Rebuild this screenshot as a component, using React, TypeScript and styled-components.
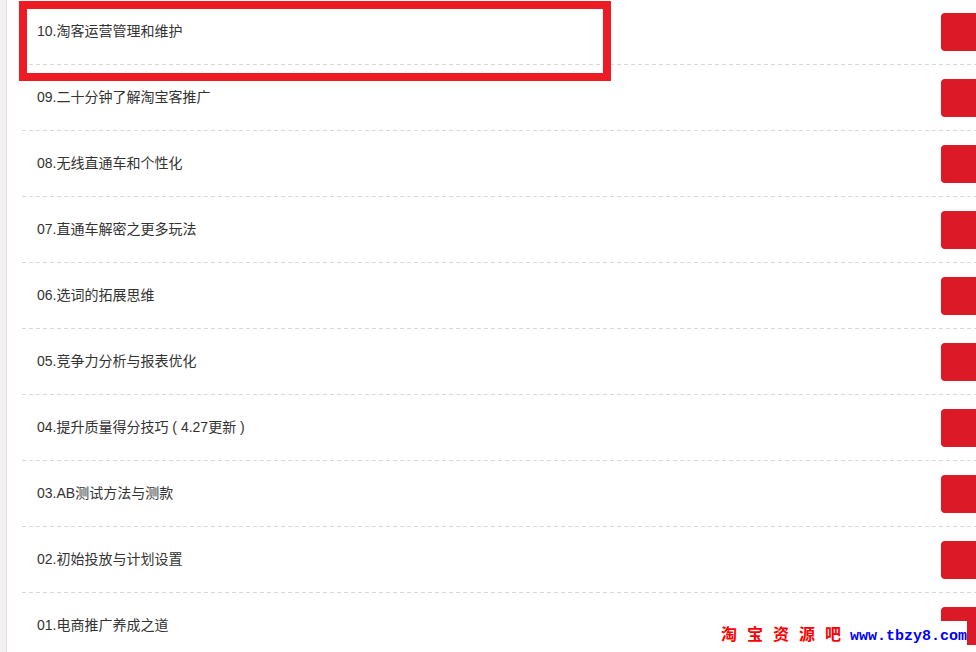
import styled, { createGlobalStyle } from "styled-components";

const GlobalStyle = createGlobalStyle`
    html, body {
        margin: 0;
        padding: 0;
        background: #ffffff;
        overflow: hidden;
    }
    body {
        font-family: "Liberation Sans", "Noto Sans CJK SC", sans-serif;
    }
`

const Page = styled.div`
    display: flex;
    width: 976px;
    height: 652px;
    overflow: hidden;
    position: relative;
`

const SideStrip = styled.div`
    width: 6px;
    flex-shrink: 0;
    background-color: #f2f1ef;
    border-right: 1px solid #e3e2e0;
`

const LessonList = styled.ul`
    list-style: none;
    margin: -1px 0 0 15px;
    padding: 0;
    width: 999px;
    flex-shrink: 0;
`

const LessonRow = styled.li`
    display: flex;
    align-items: center;
    justify-content: space-between;
    height: 65px;
    padding-left: 15px;
    background-image: repeating-linear-gradient(to right, #d8d8d8 0 4px, transparent 4px 7px);
    background-size: 100% 1px;
    background-repeat: no-repeat;
    background-position: left bottom;
    padding-bottom: 1px;
`

const LessonTitle = styled.span`
    font-size: 14px;
    line-height: 20px;
    color: #333333;
    margin-bottom: 2px;
`

const PlayButton = styled.button`
    width: 80px;
    height: 38px;
    border: none;
    border-radius: 4px;
    background-color: #dc1a27;
    cursor: pointer;
`

const Highlight = styled.div`
    position: absolute;
    left: 19px;
    top: 1px;
    width: 576px;
    height: 64px;
    border: 8px solid #ed1c24;
    pointer-events: none;
`

const Watermark = styled.div`
    position: absolute;
    right: 9px;
    bottom: 0;
    height: 31px;
    box-sizing: border-box;
    padding: 4px 0 0 12px;
    display: flex;
    align-items: baseline;
    background: #ffffff;
`

const WatermarkName = styled.span`
    font-family: "Noto Sans CJK SC", sans-serif;
    font-size: 16px;
    font-weight: 700;
    letter-spacing: 10px;
    color: #ff0000;
    line-height: 1;
    margin-right: -1px;
`

const WatermarkUrl = styled.span`
    font-family: "Liberation Mono", monospace;
    font-size: 15px;
    font-weight: 700;
    color: #0000ff;
    line-height: 1;
`

const lessons = [
    "10.淘客运营管理和维护",
    "09.二十分钟了解淘宝客推广",
    "08.无线直通车和个性化",
    "07.直通车解密之更多玩法",
    "06.选词的拓展思维",
    "05.竞争力分析与报表优化",
    "04.提升质量得分技巧 ( 4.27更新 )",
    "03.AB测试方法与测款",
    "02.初始投放与计划设置",
    "01.电商推广养成之道",
]

const App: React.FC = () => {
    return (
        <Page>
            <GlobalStyle />
            <SideStrip />
            <LessonList>
                {lessons.map((title) => (
                    <LessonRow key={title}>
                        <LessonTitle>{title}</LessonTitle>
                        <PlayButton aria-label="play" />
                    </LessonRow>
                ))}
            </LessonList>
            <Highlight />
            <Watermark>
                <WatermarkName>淘宝资源吧</WatermarkName>
                <WatermarkUrl>www.tbzy8.com</WatermarkUrl>
            </Watermark>
        </Page>
    );
}

export default App;
